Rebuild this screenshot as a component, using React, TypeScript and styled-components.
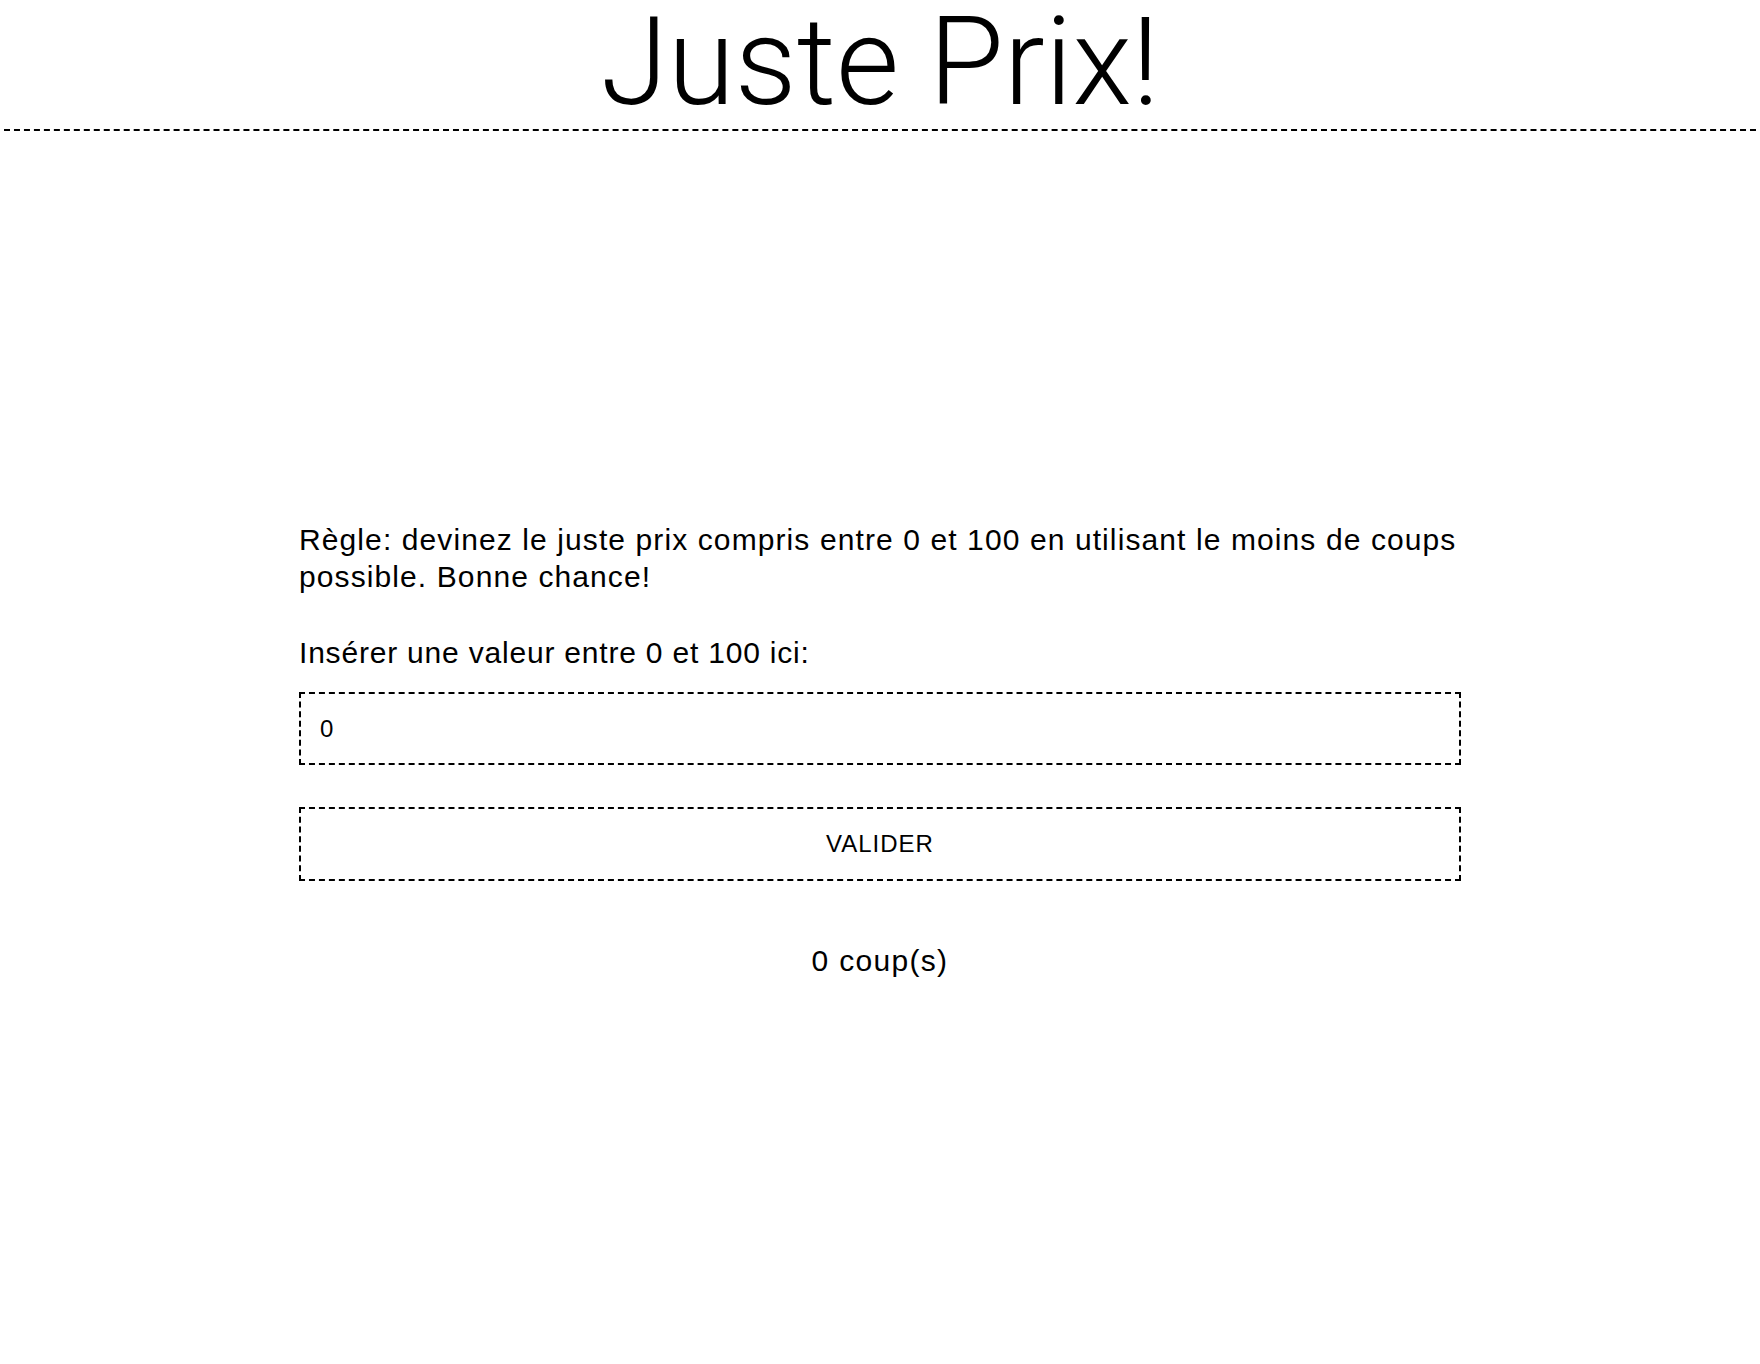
import React, { useState } from "react";
import styled, { createGlobalStyle } from "styled-components";

const GlobalStyle = createGlobalStyle`
  html, body {
    margin: 0;
    padding: 0;
    background: #ffffff;
    color: #000000;
    font-family: "Liberation Sans", Arial, sans-serif;
  }
`;

const Page = styled.div`
  display: flex;
  flex-direction: column;
  min-height: 100vh;
`;

const Header = styled.header`
  margin: 0 4px;
  padding-top: 2px;
  padding-bottom: 5px;
  border-bottom: 2px dashed #000;
`;

const Title = styled.h1`
  margin: 0;
  text-align: center;
  font-family: Roboto, "Liberation Sans", sans-serif;
  font-weight: 300;
  font-size: 122px;
  line-height: 122px;
`;

const Main = styled.main`
  width: 1162px;
  margin: 0 auto;
  padding-top: 390px;
  display: flex;
  flex-direction: column;
`;

const Text = styled.p`
  margin: 0;
  font-size: 30px;
  line-height: 37px;
  letter-spacing: 1.1px;
`;

const Label = styled.label`
  display: block;
  margin-top: 39px;
  font-size: 30px;
  line-height: 37px;
  letter-spacing: 0.8px;
`;

const Field = styled.input`
  box-sizing: border-box;
  margin-top: 21px;
  width: 100%;
  height: 73px;
  padding: 0 19px;
  border: 2px dashed #000;
  border-radius: 0;
  outline: none;
  background: #fff;
  font-family: "Liberation Sans", Arial, sans-serif;
  font-size: 24px;
  letter-spacing: 1px;
  color: #000;
`;

const Button = styled.button`
  box-sizing: border-box;
  margin-top: 42px;
  width: 100%;
  height: 74px;
  padding: 0;
  border: 2px dashed #000;
  border-radius: 0;
  background: #fff;
  font-family: "Liberation Sans", Arial, sans-serif;
  font-size: 24px;
  letter-spacing: 1px;
  text-transform: uppercase;
  color: #000;
  cursor: pointer;
`;

const Counter = styled(Text)`
  margin-top: 61px;
  text-align: center;
  letter-spacing: 1.3px;
`;

export default function App() {
  const [value, setValue] = useState("0");
  const [count, setCount] = useState(0);
  return (
    <Page>
      <GlobalStyle />
      <Header>
        <Title>Juste Prix!</Title>
      </Header>
      <Main>
        <Text>
          Règle: devinez le juste prix compris entre 0 et 100 en utilisant le moins de coups possible. Bonne chance!
        </Text>
        <Label htmlFor="guess">Insérer une valeur entre 0 et 100 ici:</Label>
        <Field id="guess" type="text" value={value} onChange={(e) => setValue(e.target.value)} />
        <Button type="button" onClick={() => setCount((c) => c + 1)}>Valider</Button>
        <Counter>{count} coup(s)</Counter>
      </Main>
    </Page>
  );
}
